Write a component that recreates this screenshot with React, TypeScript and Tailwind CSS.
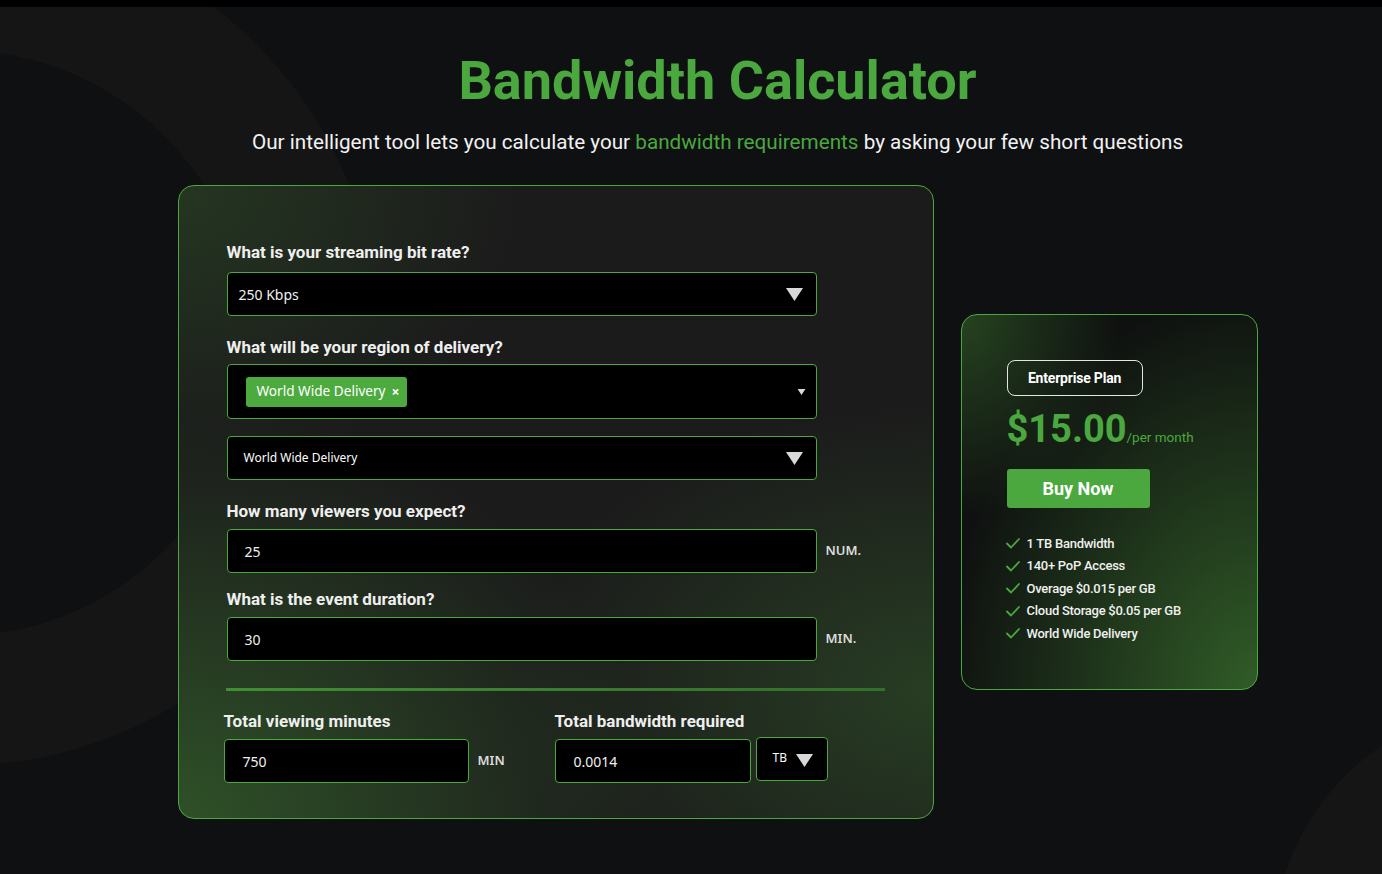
import React from "react";

function Tri({ w = 17, h = 13 }: { w?: number; h?: number }) {
  return (
    <svg width={w} height={h} viewBox="0 0 17 13" className="shrink-0">
      <polygon points="0,0 17,0 8.5,13" fill="#d9d9d9" />
    </svg>
  );
}

function Check() {
  return (
    <svg width="14" height="11" viewBox="0 0 14 11" className="shrink-0">
      <path d="M1 5.5 L5 9.5 L13 1" fill="none" stroke="#4aa83f" strokeWidth="1.8" strokeLinecap="round" strokeLinejoin="round" />
    </svg>
  );
}

function Label({ children, className = "" }: { children: React.ReactNode; className?: string }) {
  return (
    <div className={"text-[17px] leading-[24px] font-bold text-[#efefef] font-['Roboto',sans-serif] " + className}>
      {children}
    </div>
  );
}

export default function App() {
  return (
    <div className="relative min-h-[874px] w-full overflow-hidden bg-[#0f1012] font-['Roboto',sans-serif]">
      {/* decorative rings */}
      <div className="absolute left-[-466px] top-[-80px] h-[846px] w-[846px] rounded-full border-[130px] border-[#151515]" />
      <div className="absolute left-[1273px] top-[703px] h-[494px] w-[494px] rounded-full bg-[#151515]" />

      <div className="relative h-[7px] w-full bg-black" />

      <div className="relative flex flex-col items-center pl-[53px]">
        <h1 className="mt-[47px] text-[54px] leading-none font-bold text-[#4aa83f]">Bandwidth Calculator</h1>
        <p className="mt-[22px] text-[20.7px] leading-[25px] text-[#f2f2f2]">
          Our intelligent tool lets you calculate your <span className="text-[#4aa83f]">bandwidth requirements</span> by asking your few short questions
        </p>

        <div className="mt-[30px] flex items-center gap-[27px]">
          {/* main card */}
          <div className="w-[756px] rounded-[16px] border border-[#4aa83f] bg-[#1b1b1b] bg-[radial-gradient(ellipse_at_0%_100%,rgba(62,125,50,0.55),transparent_45%),radial-gradient(ellipse_at_100%_80%,rgba(62,125,50,0.35),transparent_40%),radial-gradient(ellipse_at_0%_0%,rgba(62,125,50,0.28),transparent_32%)] pl-[48px] pt-[54px] pb-[35px]">
            <Label>What is your streaming bit rate?</Label>
            <div className="mt-[8px] flex h-[44px] w-[590px] items-center justify-between rounded-[4px] border border-[#4aa83f] bg-black pl-[11px] pr-[13px] font-['Noto_Sans',sans-serif] text-[14px] text-[#f0f0f0]">
              <span>250 Kbps</span>
              <Tri />
            </div>

            <Label className="mt-[19px]">What will be your region of delivery?</Label>
            <div className="mt-[5px] flex h-[55px] w-[590px] items-center justify-between rounded-[4px] border border-[#4aa83f] bg-black pl-[18px] pr-[10px]">
              <div className="flex h-[30px] items-center gap-[6px] rounded-[3px] bg-[#4caa3f] pl-[11px] pr-[7px] font-['Noto_Sans',sans-serif] text-[13.6px] text-white">
                <span>World Wide Delivery</span>
                <span className="text-[14px] font-bold leading-none">×</span>
              </div>
              <Tri w={9} h={6} />
            </div>

            <div className="mt-[17px] flex h-[44px] w-[590px] items-center justify-between rounded-[4px] border border-[#4aa83f] bg-black pl-[16px] pr-[13px] font-['Noto_Sans',sans-serif] text-[12px] text-white">
              <span>World Wide Delivery</span>
              <Tri />
            </div>

            <Label className="mt-[19px]">How many viewers you expect?</Label>
            <div className="mt-[6px] flex items-center">
              <div className="flex h-[44px] w-[590px] items-center rounded-[4px] border border-[#4aa83f] bg-black pl-[17px] font-['Noto_Sans',sans-serif] text-[14px] text-[#f0f0f0]">25</div>
              <span className="ml-[9px] font-['Noto_Sans',sans-serif] text-[13px] font-semibold text-[#dcdcdc]">NUM.</span>
            </div>

            <Label className="mt-[14px]">What is the event duration?</Label>
            <div className="mt-[6px] flex items-center">
              <div className="flex h-[44px] w-[590px] items-center rounded-[4px] border border-[#4aa83f] bg-black pl-[17px] font-['Noto_Sans',sans-serif] text-[14px] text-[#f0f0f0]">30</div>
              <span className="ml-[9px] font-['Noto_Sans',sans-serif] text-[13px] font-semibold text-[#dcdcdc]">MIN.</span>
            </div>

            <div className="ml-[-1px] mt-[27px] h-[3px] w-[659px] bg-[linear-gradient(90deg,#3f8f34,#346e2c)]" />

            <div className="ml-[-3px] mt-[18px] flex items-start">
              <div className="w-[331px]">
                <Label>Total viewing minutes</Label>
                <div className="mt-[6px] flex items-center">
                  <div className="flex h-[44px] w-[245px] items-center rounded-[4px] border border-[#4aa83f] bg-black pl-[18px] font-['Noto_Sans',sans-serif] text-[14px] text-[#f0f0f0]">750</div>
                  <span className="ml-[9px] font-['Noto_Sans',sans-serif] text-[13px] font-semibold text-[#dcdcdc]">MIN</span>
                </div>
              </div>
              <div>
                <Label>Total bandwidth required</Label>
                <div className="mt-[6px] flex items-start">
                  <div className="flex h-[44px] w-[196px] items-center rounded-[4px] border border-[#4aa83f] bg-black pl-[18px] font-['Noto_Sans',sans-serif] text-[14px] text-[#f0f0f0]">0.0014</div>
                  <div className="ml-[5px] mt-[-2px] flex h-[44px] w-[72px] items-center rounded-[4px] border border-[#4aa83f] bg-black pl-[16px] font-['Noto_Sans',sans-serif] text-[12px] text-white">
                    <span className="mt-[-3px]">TB</span>
                    <span className="ml-[9px] mt-[2px]"><Tri /></span>
                  </div>
                </div>
              </div>
            </div>
          </div>

          {/* pricing card */}
          <div className="w-[297px] rounded-[16px] border border-[#4aa83f] bg-[#0f1110] bg-[radial-gradient(ellipse_at_100%_100%,rgba(52,100,42,0.9),transparent_75%),radial-gradient(ellipse_at_0%_0%,rgba(52,100,42,0.6),transparent_38%)] pl-[45px] pt-[45px] pb-[44px]">
            <div className="flex h-[36px] w-[136px] items-center justify-center rounded-[8px] border border-[#e5e5e5] text-[14px] font-bold tracking-[-0.2px] text-white">
              Enterprise Plan
            </div>
            <div className="mt-[14px] flex items-baseline">
              <span className="text-[38px] leading-none font-bold text-[#4aa83f]">$15.00</span>
              <span className="text-[13.5px] text-[#4aa83f]">/per month</span>
            </div>
            <div className="mt-[21px] flex h-[39px] w-[143px] items-center justify-center rounded-[3px] bg-[#4aa83f] text-[18px] font-bold text-white">
              Buy Now
            </div>
            <ul className="mt-[24px] ml-[-1px]">
              {["1 TB Bandwidth", "140+ PoP Access", "Overage $0.015 per GB", "Cloud Storage $0.05 per GB", "World Wide Delivery"].map((t) => (
                <li key={t} className="flex h-[22.5px] items-center gap-[7px] text-[13px] font-medium tracking-[-0.25px] text-[#f0f0f0]">
                  <Check />
                  <span>{t}</span>
                </li>
              ))}
            </ul>
          </div>
        </div>
      </div>
    </div>
  );
}
